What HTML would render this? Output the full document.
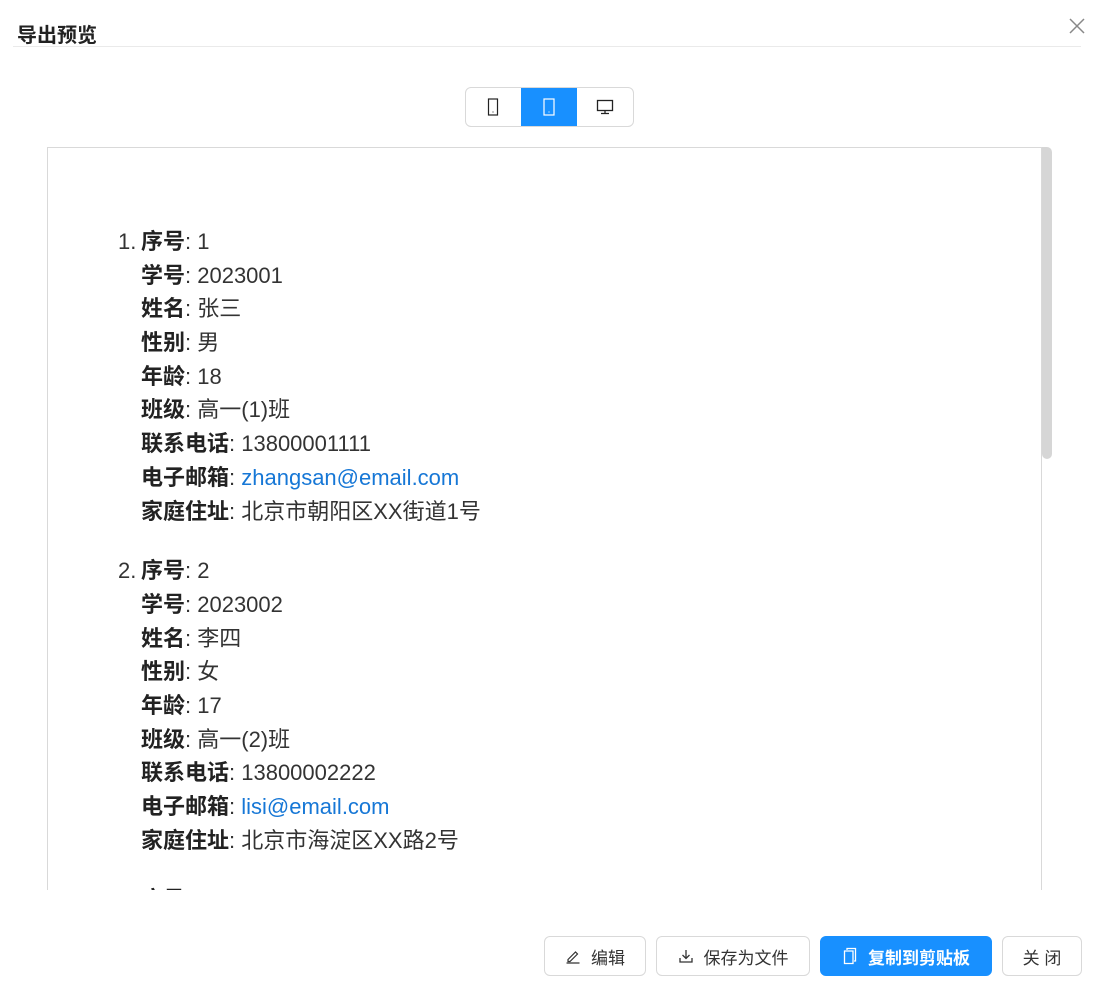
<!DOCTYPE html>
<html><head><meta charset="utf-8"><style>
*{box-sizing:border-box;margin:0;padding:0}
body{width:1105px;height:989px;background:#fff;font-family:"Liberation Sans","Noto Sans CJK SC",sans-serif;color:#333;position:relative;overflow:hidden}
.title{position:absolute;left:17px;top:19px;font-size:20px;font-weight:bold;color:#222}
.div{position:absolute;left:13px;top:46px;width:1068px;height:1px;background:#eaeaea}
.x{position:absolute;left:1068px;top:17px}
.seg{position:absolute;left:465px;top:87px;width:169px;height:40px;border:1px solid #d9d9d9;border-radius:6px;overflow:hidden;display:flex}
.seg div{display:flex;align-items:center;justify-content:center;height:100%}
.box{position:absolute;left:47px;top:147px;width:995px;height:743px;border:1px solid #d9d9d9;border-bottom:none;overflow:hidden}
.sb{position:absolute;left:1042px;top:147px;width:10px;height:312px;background:#d6d6d6;border-radius:0 5px 5px 5px}
ol{position:absolute;left:70px;top:77px;font-size:22px;color:#333;list-style:none}
li{margin-bottom:26px;position:relative;padding-left:23px}
li div{height:33.7px;line-height:33.7px;white-space:nowrap}
li .n{position:absolute;left:0;top:0;line-height:33.7px}
b{color:#222}
a{color:#1677d6;text-decoration:none}
.btn{position:absolute;top:936px;height:40px;border:1px solid #d9d9d9;border-radius:6px;display:flex;align-items:center;justify-content:center;font-size:17px;color:#333;gap:10px}
.pri{background:#1890ff;border-color:#1890ff;color:#fff;font-weight:bold}
</style></head><body>
<div class="title">导出预览</div>
<div class="div"></div>
<svg class="x" width="18" height="18" viewBox="0 0 18 18"><path d="M2 2L16 16M16 2L2 16" stroke="#888" stroke-width="1.5"/></svg>
<div class="seg">
<div style="width:55px"><svg width="12" height="18" viewBox="0 0 12 18"><rect x="1.5" y="1" width="9" height="16" fill="none" stroke="#222" stroke-width="1.2"/><rect x="5.5" y="13.5" width="1" height="1" fill="#222"/></svg></div>
<div style="width:57px;background:#1890ff"><svg width="12" height="18" viewBox="0 0 12 18"><rect x="1" y="1" width="10" height="16" fill="none" stroke="#fff" stroke-width="1.2"/><rect x="5.5" y="13.5" width="1" height="1" fill="#fff"/></svg></div>
<div style="width:56px"><svg width="18" height="16" viewBox="0 0 18 16"><rect x="1.5" y="1.5" width="15" height="10" fill="none" stroke="#222" stroke-width="1.3"/><path d="M9 11.5V14M5 14.5H13" stroke="#222" stroke-width="1.3"/></svg></div>
</div>
<div class="box">
<ol>
<li><span class="n">1.</span><div><b>序号</b>: 1</div><div><b>学号</b>: 2023001</div><div><b>姓名</b>: 张三</div><div><b>性别</b>: 男</div><div><b>年龄</b>: 18</div><div><b>班级</b>: 高一(1)班</div><div><b>联系电话</b>: 13800001111</div><div><b>电子邮箱</b>: <a>zhangsan@email.com</a></div><div><b>家庭住址</b>: 北京市朝阳区XX街道1号</div></li>
<li><span class="n">2.</span><div><b>序号</b>: 2</div><div><b>学号</b>: 2023002</div><div><b>姓名</b>: 李四</div><div><b>性别</b>: 女</div><div><b>年龄</b>: 17</div><div><b>班级</b>: 高一(2)班</div><div><b>联系电话</b>: 13800002222</div><div><b>电子邮箱</b>: <a>lisi@email.com</a></div><div><b>家庭住址</b>: 北京市海淀区XX路2号</div></li>
<li><span class="n">3.</span><div><b>序号</b>: 3</div><div><b>学号</b>: 2023003</div></li>
</ol>
</div>
<div class="sb"></div>
<div class="btn" style="left:544px;width:102px"><svg width="16" height="16" viewBox="0 0 16 16"><path d="M3 11.5L10.5 4L12.5 6L5 13.5H3Z M1.5 15H14.5" fill="none" stroke="#333" stroke-width="1.2"/></svg>编辑</div>
<div class="btn" style="left:656px;width:154px"><svg width="16" height="16" viewBox="0 0 16 16"><path d="M8 2V10M4.5 7L8 10.5L11.5 7M2 10V14H14V10" fill="none" stroke="#333" stroke-width="1.3"/></svg>保存为文件</div>
<div class="btn pri" style="left:820px;width:172px"><svg width="16" height="18" viewBox="0 0 16 18"><path d="M5 3V1.5H13.5V14H12 M2.5 4H11V16.5H2.5Z" fill="none" stroke="#fff" stroke-width="1.3"/></svg>复制到剪贴板</div>
<div class="btn" style="left:1002px;width:80px">关 闭</div>
</body></html>
